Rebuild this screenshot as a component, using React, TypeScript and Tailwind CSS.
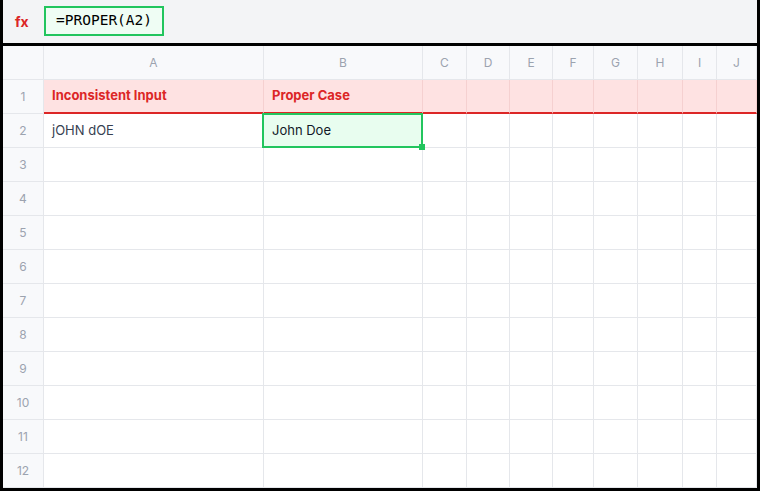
const cols = ["A", "B", "C", "D", "E", "F", "G", "H", "I", "J"];
const rows = Array.from({ length: 12 }, (_, i) => i + 1);

const cellText: Record<string, string> = {
  A1: "Inconsistent Input",
  B1: "Proper Case",
  A2: "jOHN dOE",
  B2: "John Doe",
};

export default function App() {
  return (
    <div
      className="w-[760px] h-[491px] overflow-hidden border-x-[3px] border-b-[3px] border-black bg-white flex flex-col"
      style={{ fontFamily: "Inter, 'Noto Sans', sans-serif" }}
    >
      {/* formula bar */}
      <div className="h-[46px] shrink-0 bg-[#f3f4f6] border-b-[3px] border-black flex items-center pb-[1px]">
        <div className="w-[41px] pl-[12px] text-[14px] font-bold text-[#dc2626]">fx</div>
        <div
          className="h-[30px] w-[120px] border-2 border-[#22c55e] bg-[#effdf4] flex items-center pl-[10px] text-[14.5px] text-black"
          style={{ fontFamily: "'DejaVu Sans Mono', monospace" }}
        >
          =PROPER(A2)
        </div>
      </div>

      {/* grid */}
      <div className="grid grid-cols-[41px_220px_159px_44px_43px_43px_41px_44px_45px_34px_40px] auto-rows-[34px] text-[13px]">
        <div className="bg-[#f8f9fb] border-r border-b border-[#e5e7eb]" />
        {cols.map((c) => (
          <div
            key={c}
            className="bg-[#f8f9fb] border-r border-b border-[#e5e7eb] flex items-center justify-center text-[12px] text-[#9ca3af]"
          >
            {c}
          </div>
        ))}

        {rows.map((r) => (
          <div key={r} className="contents">
            <div className="bg-[#f8f9fb] border-r border-b border-[#e5e7eb] flex items-center justify-center text-[12px] text-[#9ca3af]">
              {r}
            </div>
            {cols.map((c) => {
              const id = `${c}${r}`;
              const text = cellText[id];
              if (r === 1) {
                return (
                  <div
                    key={id}
                    className="bg-[#fee2e2] border-r border-[#f5d0d0] border-b-2 border-b-[#dc2626] flex items-center pl-2 font-bold text-[#dc2626] whitespace-nowrap"
                  >
                    {text}
                  </div>
                );
              }
              if (id === "B2") {
                return (
                  <div
                    key={id}
                    className="relative bg-[#e8fdef] border-r border-b border-[#e5e7eb] flex items-center pl-2 text-[#111827]"
                  >
                    {text}
                    <div className="absolute -left-[2px] -top-[1px] -right-[1px] -bottom-[1px] border-2 border-[#22c55e]" />
                    <div className="absolute -right-[3px] -bottom-[3px] w-[6px] h-[6px] bg-[#22c55e]" />
                  </div>
                );
              }
              return (
                <div
                  key={id}
                  className="border-r border-b border-[#e5e7eb] flex items-center pl-2 text-[#374151] whitespace-nowrap"
                >
                  {text}
                </div>
              );
            })}
          </div>
        ))}
      </div>
    </div>
  );
}
